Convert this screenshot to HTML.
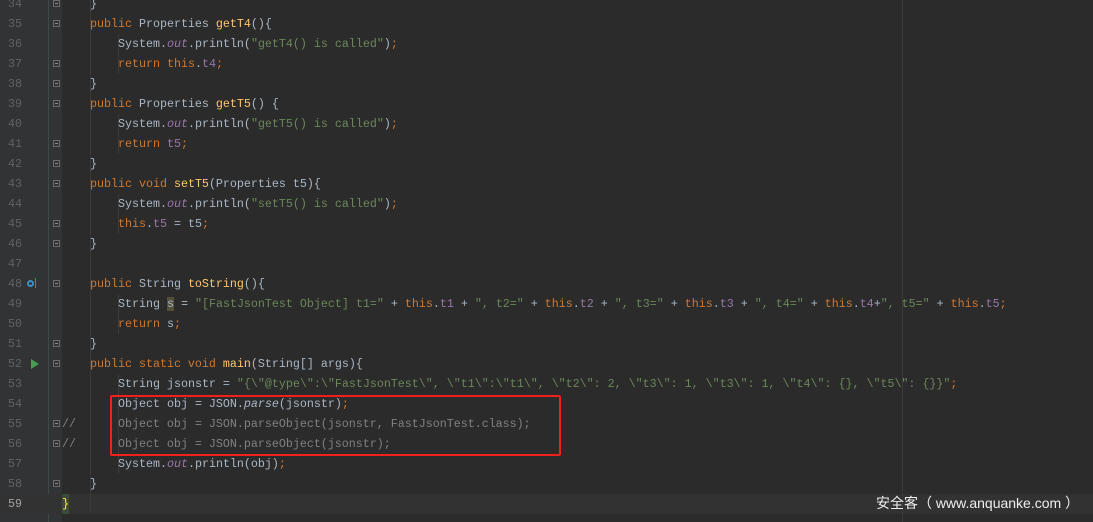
<!DOCTYPE html>
<html><head><meta charset="utf-8"><style>
body{margin:0;width:1093px;height:522px;overflow:hidden;background:#2b2b2b;position:relative;font-family:"Liberation Mono",monospace;font-size:11.67px;}
.g{position:absolute;left:0;top:0;width:62px;height:522px;background:#313335;}
.sep{position:absolute;left:48px;top:0;width:1px;height:522px;background:#3c4a4a;}
.ln{position:absolute;left:0;width:22px;text-align:right;color:#606366;height:20px;line-height:20px;}
.c{position:absolute;height:20px;line-height:20px;color:#a9b7c6;white-space:pre;}
.k{color:#cc7832}.s{color:#6a8759}.f{color:#9876aa;font-style:italic}.v{color:#9876aa}.m{color:#ffc66d}.cm{color:#808080}
.ig{position:absolute;width:1px;background:#3b3b3b;}
.fold{position:absolute;left:53px;width:7px;height:7px;border:1px solid #6a6a6a;box-sizing:border-box;}
.fold:after{content:"";position:absolute;left:1px;top:2px;width:3px;height:1px;background:#8a8a8a;}
</style></head><body>
<div class="g"></div><div class="sep"></div>
<div style="position:absolute;left:0;top:494px;width:1093px;height:20px;background:#323232"></div>
<div style="position:absolute;left:902px;top:0;width:1px;height:522px;background:#3a3a3a"></div>
<div class="ig" style="left:90px;top:0;height:514px"></div>
<div class="ig" style="left:118px;top:34px;height:40px"></div>
<div class="ig" style="left:118px;top:114px;height:40px"></div>
<div class="ig" style="left:118px;top:194px;height:40px"></div>
<div class="ig" style="left:118px;top:294px;height:40px"></div>
<div class="ig" style="left:118px;top:374px;height:100px"></div>
<div class="fold" style="top:0px"></div><div class="fold" style="top:20px"></div><div class="fold" style="top:60px"></div>
<div class="fold" style="top:80px"></div><div class="fold" style="top:100px"></div><div class="fold" style="top:140px"></div>
<div class="fold" style="top:160px"></div><div class="fold" style="top:180px"></div><div class="fold" style="top:220px"></div>
<div class="fold" style="top:240px"></div><div class="fold" style="top:280px"></div><div class="fold" style="top:340px"></div>
<div class="fold" style="top:360px"></div><div class="fold" style="top:420px"></div><div class="fold" style="top:440px"></div><div class="fold" style="top:480px"></div>
<div style="position:absolute;left:27px;top:280px;width:7px;height:7px;border:2px solid #3d8ec4;border-radius:50%;box-sizing:border-box"></div>
<div style="position:absolute;left:35px;top:278px;width:1px;height:10px;background:#e0483a"></div>
<div style="position:absolute;left:31px;top:359px;width:0;height:0;border-left:8px solid #499c54;border-top:5px solid transparent;border-bottom:5px solid transparent"></div>

<div class="ln" style="top:-6px">34</div><div class="c" style="left:90px;top:-6px">}</div>
<div class="ln" style="top:14px">35</div><div class="c" style="left:90px;top:14px"><span class="k">public </span>Properties <span class="m">getT4</span>(){</div>
<div class="ln" style="top:34px">36</div><div class="c" style="left:118px;top:34px">System.<span class="f">out</span>.println(<span class="s">"getT4() is called"</span>)<span class="k">;</span></div>
<div class="ln" style="top:54px">37</div><div class="c" style="left:118px;top:54px"><span class="k">return this</span>.<span class="v">t4</span><span class="k">;</span></div>
<div class="ln" style="top:74px">38</div><div class="c" style="left:90px;top:74px">}</div>
<div class="ln" style="top:94px">39</div><div class="c" style="left:90px;top:94px"><span class="k">public </span>Properties <span class="m">getT5</span>() {</div>
<div class="ln" style="top:114px">40</div><div class="c" style="left:118px;top:114px">System.<span class="f">out</span>.println(<span class="s">"getT5() is called"</span>)<span class="k">;</span></div>
<div class="ln" style="top:134px">41</div><div class="c" style="left:118px;top:134px"><span class="k">return </span><span class="v">t5</span><span class="k">;</span></div>
<div class="ln" style="top:154px">42</div><div class="c" style="left:90px;top:154px">}</div>
<div class="ln" style="top:174px">43</div><div class="c" style="left:90px;top:174px"><span class="k">public void </span><span class="m">setT5</span>(Properties t5){</div>
<div class="ln" style="top:194px">44</div><div class="c" style="left:118px;top:194px">System.<span class="f">out</span>.println(<span class="s">"setT5() is called"</span>)<span class="k">;</span></div>
<div class="ln" style="top:214px">45</div><div class="c" style="left:118px;top:214px"><span class="k">this</span>.<span class="v">t5</span> = t5<span class="k">;</span></div>
<div class="ln" style="top:234px">46</div><div class="c" style="left:90px;top:234px">}</div>
<div class="ln" style="top:254px">47</div>
<div class="ln" style="top:274px">48</div><div class="c" style="left:90px;top:274px"><span class="k">public </span>String <span class="m">toString</span>(){</div>
<div class="ln" style="top:294px">49</div><div class="c" style="left:118px;top:294px">String <span style="background:#52503a">s</span> = <span class="s">"[FastJsonTest Object] t1="</span> + <span class="k">this</span>.<span class="v">t1</span> + <span class="s">", t2="</span> + <span class="k">this</span>.<span class="v">t2</span> + <span class="s">", t3="</span> + <span class="k">this</span>.<span class="v">t3</span> + <span class="s">", t4="</span> + <span class="k">this</span>.<span class="v">t4</span>+<span class="s">", t5="</span> + <span class="k">this</span>.<span class="v">t5</span><span class="k">;</span></div>
<div class="ln" style="top:314px">50</div><div class="c" style="left:118px;top:314px"><span class="k">return </span>s<span class="k">;</span></div>
<div class="ln" style="top:334px">51</div><div class="c" style="left:90px;top:334px">}</div>
<div class="ln" style="top:354px">52</div><div class="c" style="left:90px;top:354px"><span class="k">public static void </span><span class="m">main</span>(String[] args){</div>
<div class="ln" style="top:374px">53</div><div class="c" style="left:118px;top:374px">String jsonstr = <span class="s">"{\"@type\":\"FastJsonTest\", \"t1\":\"t1\", \"t2\": 2, \"t3\": 1, \"t3\": 1, \"t4\": {}, \"t5\": {}}"</span><span class="k">;</span></div>
<div class="ln" style="top:394px">54</div><div class="c" style="left:118px;top:394px">Object obj = JSON.<span style="font-style:italic">parse</span>(jsonstr)<span class="k">;</span></div>
<div class="ln" style="top:414px">55</div><div class="c cm" style="left:62px;top:414px">//      Object obj = JSON.parseObject(jsonstr, FastJsonTest.class);</div>
<div class="ln" style="top:434px">56</div><div class="c cm" style="left:62px;top:434px">//      Object obj = JSON.parseObject(jsonstr);</div>
<div class="ln" style="top:454px">57</div><div class="c" style="left:118px;top:454px">System.<span class="f">out</span>.println(obj)<span class="k">;</span></div>
<div class="ln" style="top:474px">58</div><div class="c" style="left:90px;top:474px">}</div>
<div class="ln" style="top:494px;color:#a4a3a3">59</div><div class="c" style="left:62px;top:494px;color:#ffef28;background:#3b4a3b">}</div>
<div style="position:absolute;left:110px;top:395px;width:451px;height:61px;border:2px solid #f0201a;border-radius:2px;box-sizing:border-box"></div>
<div style="position:absolute;left:876px;top:493px;color:#eee;font-family:'Liberation Sans','Noto Sans CJK SC',sans-serif;font-size:14px;line-height:20px;white-space:pre">安全客（ www.anquanke.com ）</div>
</body></html>
